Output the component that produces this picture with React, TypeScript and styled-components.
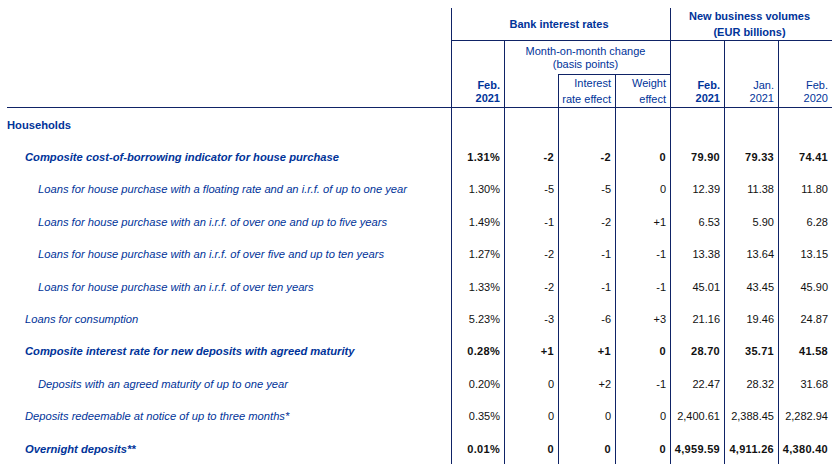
import React from "react";
import styled, { createGlobalStyle } from "styled-components";

const LINE = "#0f2366";
const BLUE = "#003399";
const COLS = "444px 53px 54px 57px 55px 54px 54px 54px";

const Global = createGlobalStyle`
  html, body { margin: 0; padding: 0; background: #ffffff; }
  body { font-family: "Liberation Sans", Arial, sans-serif; font-size: 11px; }
`;

const Page = styled.div`
  padding: 8px 0 0 7px;
  width: 825px;
`;

const Header = styled.div`
  display: grid;
  grid-template-columns: ${COLS};
  grid-template-rows: 33px 33px 34px;
`;

type HProps = {
  $col: string;
  $row: string;
  $left?: boolean;
  $top?: boolean;
  $bottom?: boolean;
  $align?: "center" | "right";
  $valign?: "center" | "end";
  $bold?: boolean;
  $lh?: number;
};

const HeaderCell = styled.div<HProps>`
  grid-column: ${(p) => p.$col};
  grid-row: ${(p) => p.$row};
  box-sizing: border-box;
  display: flex;
  flex-direction: column;
  justify-content: ${(p) => (p.$valign === "end" ? "flex-end" : "center")};
  align-items: ${(p) => (p.$align === "center" ? "center" : "flex-end")};
  text-align: ${(p) => p.$align ?? "right"};
  padding: 0 4px ${(p) => (p.$valign === "end" ? "2px" : "0")} 0;
  border-left: ${(p) => (p.$left ? `1px solid ${LINE}` : "none")};
  border-top: ${(p) => (p.$top ? `1px solid ${LINE}` : "none")};
  border-bottom: ${(p) => (p.$bottom ? `1px solid ${LINE}` : "none")};
  color: ${BLUE};
  font-weight: ${(p) => (p.$bold ? 700 : 400)};
  line-height: ${(p) => p.$lh ?? 13}px;
  white-space: nowrap;
`;

const Row = styled.div`
  display: grid;
  grid-template-columns: ${COLS};
  height: 32.4px;
`;

const Label = styled.div<{ $indent: number; $bold?: boolean; $italic?: boolean }>`
  display: flex;
  align-items: center;
  padding-left: ${(p) => p.$indent}px;
  padding-top: 1px;
  color: ${BLUE};
  font-size: 11.2px;
  font-weight: ${(p) => (p.$bold ? 700 : 400)};
  font-style: ${(p) => (p.$italic ? "italic" : "normal")};
  white-space: nowrap;
`;

const Value = styled.div<{ $bold?: boolean }>`
  display: flex;
  align-items: center;
  justify-content: flex-end;
  padding-right: 4px;
  padding-top: 1px;
  border-left: 1px solid ${LINE};
  color: #111111;
  font-weight: ${(p) => (p.$bold ? 700 : 400)};
  letter-spacing: ${(p) => (p.$bold ? "0.3px" : "0")};
  white-space: nowrap;
`;

type RowData = {
  label: string;
  level: 0 | 1 | 2;
  bold?: boolean;
  values: string[];
};

const rows: RowData[] = [
  { label: "Households", level: 0, bold: true, values: ["", "", "", "", "", "", ""] },
  {
    label: "Composite cost-of-borrowing indicator for house purchase",
    level: 1,
    bold: true,
    values: ["1.31%", "-2", "-2", "0", "79.90", "79.33", "74.41"],
  },
  {
    label: "Loans for house purchase with a floating rate and an i.r.f. of up to one year",
    level: 2,
    values: ["1.30%", "-5", "-5", "0", "12.39", "11.38", "11.80"],
  },
  {
    label: "Loans for house purchase with an i.r.f. of over one and up to five years",
    level: 2,
    values: ["1.49%", "-1", "-2", "+1", "6.53", "5.90", "6.28"],
  },
  {
    label: "Loans for house purchase with an i.r.f. of over five and up to ten years",
    level: 2,
    values: ["1.27%", "-2", "-1", "-1", "13.38", "13.64", "13.15"],
  },
  {
    label: "Loans for house purchase with an i.r.f. of over ten years",
    level: 2,
    values: ["1.33%", "-2", "-1", "-1", "45.01", "43.45", "45.90"],
  },
  {
    label: "Loans for consumption",
    level: 1,
    values: ["5.23%", "-3", "-6", "+3", "21.16", "19.46", "24.87"],
  },
  {
    label: "Composite interest rate for new deposits with agreed maturity",
    level: 1,
    bold: true,
    values: ["0.28%", "+1", "+1", "0", "28.70", "35.71", "41.58"],
  },
  {
    label: "Deposits with an agreed maturity of up to one year",
    level: 2,
    values: ["0.20%", "0", "+2", "-1", "22.47", "28.32", "31.68"],
  },
  {
    label: "Deposits redeemable at notice of up to three months*",
    level: 1,
    values: ["0.35%", "0", "0", "0", "2,400.61", "2,388.45", "2,282.94"],
  },
  {
    label: "Overnight deposits**",
    level: 1,
    bold: true,
    values: ["0.01%", "0", "0", "0", "4,959.59", "4,911.26", "4,380.40"],
  },
];

const INDENT = [0, 18, 31];

export default function App() {
  return (
    <Page>
      <Global />
      <Header>
        <HeaderCell $col="1" $row="1 / 4" $bottom />
        <HeaderCell $col="2 / 6" $row="1" $left $bottom $bold $align="center" $lh={16}>
          Bank interest rates
        </HeaderCell>
        <HeaderCell $col="6 / 9" $row="1" $left $bottom $bold $align="center" $lh={16}>
          <span>New business volumes</span>
          <span>(EUR billions)</span>
        </HeaderCell>
        <HeaderCell $col="2" $row="2 / 4" $left $bottom $bold $valign="end">
          <span>Feb.</span>
          <span>2021</span>
        </HeaderCell>
        <HeaderCell $col="3 / 6" $row="2" $left $align="center">
          <span>Month-on-month change</span>
          <span>(basis points)</span>
        </HeaderCell>
        <HeaderCell $col="3" $row="3" $left $bottom />
        <HeaderCell $col="4" $row="3" $left $top $bottom $lh={16}>
          <span>Interest</span>
          <span>rate effect</span>
        </HeaderCell>
        <HeaderCell $col="5" $row="3" $left $top $bottom $lh={16}>
          <span>Weight</span>
          <span>effect</span>
        </HeaderCell>
        <HeaderCell $col="6" $row="2 / 4" $left $bottom $bold $valign="end">
          <span>Feb.</span>
          <span>2021</span>
        </HeaderCell>
        <HeaderCell $col="7" $row="2 / 4" $left $bottom $valign="end">
          <span>Jan.</span>
          <span>2021</span>
        </HeaderCell>
        <HeaderCell $col="8" $row="2 / 4" $left $bottom $valign="end">
          <span>Feb.</span>
          <span>2020</span>
        </HeaderCell>
      </Header>
      {rows.map((r) => (
        <Row key={r.label}>
          <Label $indent={INDENT[r.level]} $bold={r.bold} $italic={r.level > 0}>
            {r.label}
          </Label>
          {r.values.map((v, i) => (
            <Value key={i} $bold={r.bold}>
              {v}
            </Value>
          ))}
        </Row>
      ))}
    </Page>
  );
}
